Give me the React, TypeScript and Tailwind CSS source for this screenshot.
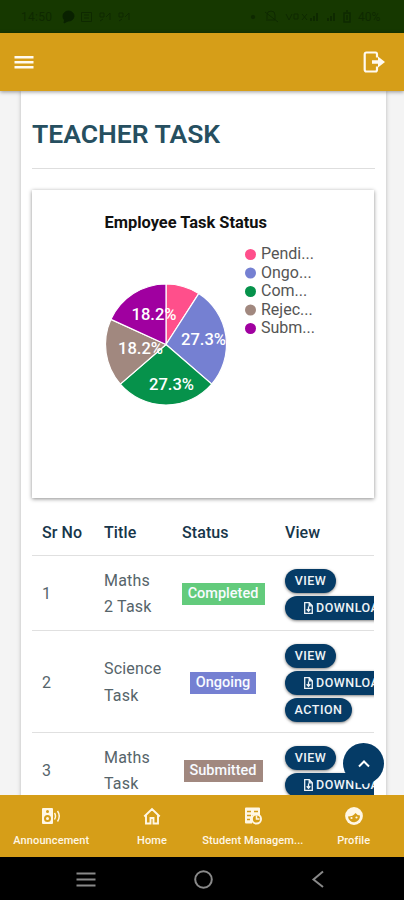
import type { ReactNode } from "react";

interface Slice {
  label: string;
  count: number;
  color: string;
  text?: { x: number; y: number; value: string };
}

const slices: Slice[] = [
  { label: "Pendi...", count: 1, color: "#ff4f8b" },
  { label: "Ongo...", count: 3, color: "#7580d2", text: { x: 149, y: 155, value: "27.3%" } },
  { label: "Com...", count: 3, color: "#06924b", text: { x: 117, y: 200, value: "27.3%" } },
  { label: "Rejec...", count: 2, color: "#a1887f", text: { x: 86, y: 163.5, value: "18.2%" } },
  { label: "Subm...", count: 2, color: "#a000a0", text: { x: 99.5, y: 129.5, value: "18.2%" } },
];

interface Task {
  id: number;
  title: [string, string];
  status: string;
  badge: string;
  action?: boolean;
}

const tasks: Task[] = [
  { id: 1, title: ["Maths", "2 Task"], status: "Completed", badge: "bg-[#63cb7c] w-[83px]" },
  { id: 2, title: ["Science", "Task"], status: "Ongoing", badge: "bg-[#7580d2] w-[66px]", action: true },
  { id: 3, title: ["Maths", "Task"], status: "Submitted", badge: "bg-[#a1887f] w-[79px]" },
];

function StatusBar() {
  return (
    <div className="flex h-[33px] shrink-0 items-center bg-[#163800] pl-[21px] pr-[21px] text-[12px] text-[#0e2900]">
      <span className="w-[41px] tracking-wide">14:50</span>
      <svg width="69" height="14" viewBox="0 0 69 14" fill="none" stroke="currentColor">
        <path d="M1 6a5.500 5 0 1 1 5 5l-4 2 .5-3A5 5 0 0 1 1 6z" fill="#092100" stroke="#092100" />
        <path d="M19.500 2.500h10v9h-10zM22 5h5M22 8h5" />
        <path d="M38 3h4v4h-4zM44 7l4-4v7M38 11l3-2M57 3h4v4h-4zM63 7l4-4v7M57 11l3-2" />
      </svg>
      <svg className="ml-auto" width="104" height="14" viewBox="0 0 104 14" fill="none" stroke="currentColor">
        <circle cx="3" cy="7" r="1.700" fill="currentColor" />
        <path d="M17 9V5a4 4 0 0 1 8 0v5H16M15 2l13 10M36 4l3 6 3-6M44 4h4v5h-4zM52 4l5 6M57 4l-5 6" />
        <path d="M61 11V8M64 11V6M67 11V3M78 11V8M81 11V6M84 11V3" strokeWidth="2" />
        <path d="M94 3h6v9h-6zM96 1h2M97 5v5" strokeWidth="1.500" />
      </svg>
      <span className="ml-1 w-[25px]">40%</span>
    </div>
  );
}

function LogoutIcon() {
  return (
    <svg width="22" height="22" viewBox="0 0 22 22" fill="none" stroke="#fffaf0" strokeWidth="2.200">
      <path d="M14 6.500V3.500Q14 1.500 12.500 1.500H3.500Q1.700 1.500 1.700 3.500v15Q1.700 20.500 3.500 20.500h9q1.500 0 1.500-2V15.500" />
      <path d="M9 9.300h6V5.500l7 5.500-7 5.500v-3.800H9z" fill="#fffaf0" stroke="none" />
    </svg>
  );
}

function Header() {
  return (
    <header className="z-10 flex h-[58px] shrink-0 items-center justify-between bg-[#d69e18] pl-[14px] pr-[19px] shadow-[0_1px_4px_rgba(0,0,0,0.4)]">
      <svg width="20" height="14" viewBox="0 0 20 14" fill="#fffaf0">
        <path d="M.5 1h19v2.600H.5zM.5 6h19v2.600H.5zM.5 11h19v2.600H.5z" />
      </svg>
      <LogoutIcon />
    </header>
  );
}

function PieChart() {
  const total = slices.reduce((sum, s) => sum + s.count, 0);
  const cx = 134;
  const cy = 154.5;
  const r = 60.5;
  let angle = 0;

  const paths = slices.map((s) => {
    const start = angle;
    angle += (s.count / total) * Math.PI * 2;
    const x1 = cx + r * Math.sin(start);
    const y1 = cy - r * Math.cos(start);
    const x2 = cx + r * Math.sin(angle);
    const y2 = cy - r * Math.cos(angle);
    return { ...s, d: `M${cx} ${cy}L${x1} ${y1}A${r} ${r} 0 0 1 ${x2} ${y2}Z` };
  });

  return (
    <svg width="342" height="308" viewBox="0 0 342 308" className="block">
      <text x="72.500" y="38" fontSize="16" fontWeight="700" fill="#111" textLength="162.500" lengthAdjust="spacingAndGlyphs">
        Employee Task Status
      </text>
      {paths.map((p) => (
        <path key={p.label} d={p.d} fill={p.color} stroke="#fff" strokeWidth="1.200" />
      ))}
      {paths.map(
        (p) =>
          p.text && (
            <text
              key={p.label}
              x={p.text.x}
              y={p.text.y}
              fontSize="16.500"
              fontWeight="500"
              fill="#fff"
              textLength="45"
              lengthAdjust="spacingAndGlyphs"
            >
              {p.text.value}
            </text>
          ),
      )}
      {slices.map((s, i) => (
        <g key={s.label}>
          <circle cx="218.500" cy={64.5 + i * 18.5} r="5.500" fill={s.color} />
          <text x="229" y={69 + i * 18.5} fontSize="16" fill="#555">
            {s.label}
          </text>
        </g>
      ))}
    </svg>
  );
}

function Pill({ className, children }: { className: string; children: ReactNode }) {
  return (
    <div
      className={`flex h-6 shrink-0 items-center rounded-full bg-[#053b66] text-[12.5px] font-medium tracking-[0.5px] text-[#eef3f7] shadow-[0_1px_3px_rgba(0,0,0,0.5)] ${className}`}
    >
      {children}
    </div>
  );
}

function DownloadIcon() {
  return (
    <svg width="9" height="12" viewBox="0 0 9 12" fill="none" stroke="currentColor" strokeWidth="1.300">
      <path d="M.7.7h4.600l3 3v7.600H.7zM5.200.8v3h3M4.500 4.500v4.300M2.700 7.200l1.800 2 1.800-2" />
    </svg>
  );
}

function TaskRow({ task }: { task: Task }) {
  return (
    <div
      className={`grid shrink-0 grid-cols-[62px_78px_102px_100px] border-t border-[#e0e0e0] ${
        task.action ? "h-[102px]" : "h-[75px]"
      }`}
    >
      <div className="flex items-center pl-[10px] pt-[2px]">{task.id}</div>
      <div className="flex flex-col justify-center pl-[10px] pt-[2px] leading-[26.5px]">
        <span>{task.title[0]}</span>
        <span>{task.title[1]}</span>
      </div>
      <div className="flex items-center justify-center pt-[2px]">
        <span
          className={`flex h-[22px] items-center justify-center text-[14.5px] font-medium tracking-normal text-[#f8fbff] ${task.badge}`}
        >
          {task.status}
        </span>
      </div>
      <div className="flex flex-col items-start gap-[3px] overflow-hidden pl-[11px] pt-[13px]">
        <Pill className="w-[51px] justify-center">VIEW</Pill>
        <Pill className="w-[119px] gap-[3px] pl-[19px]">
          <DownloadIcon />
          DOWNLOAD
        </Pill>
        {task.action && <Pill className="w-[67px] justify-center">ACTION</Pill>}
      </div>
    </div>
  );
}

function NavItem({ label, children }: { label: string; children: ReactNode }) {
  return (
    <div className="flex w-[101px] flex-col items-center pt-[11px] text-[#fff7e5]">
      <svg width="20" height="20" viewBox="0 0 20 20" fill="none" stroke="currentColor" strokeWidth="1.700">
        {children}
      </svg>
      <span className="mt-[8px] whitespace-nowrap text-[11px] font-medium leading-[14px] tracking-[0.1px]">
        {label}
      </span>
    </div>
  );
}

function BottomNav() {
  return (
    <nav className="z-10 flex h-[62px] shrink-0 bg-[#d69e18] pl-px">
      <NavItem label="Announcement">
        <path
          d="M2 2h9q1 0 1 1v14q0 1-1 1H2q-1 0-1-1V3q0-1 1-1zM6.500 4a1.500 1.500 0 1 0 0 3 1.500 1.500 0 0 0 0-3zM6.500 9a3.500 3.500 0 1 0 0 7 3.500 3.500 0 0 0 0-7z"
          fill="currentColor"
          fillRule="evenodd"
          stroke="none"
        />
        <circle cx="6.500" cy="12.500" r="1.500" fill="currentColor" stroke="none" />
        <path d="M13.500 7q2 3 0 6.500M16.500 5q3.500 5 0 10.500" strokeWidth="1.500" />
      </NavItem>
      <NavItem label="Home">
        <path d="M2.300 10.500 10 3l7.700 7.500M4 9.500v8h4.500V12h3v5.500H16v-8" strokeWidth="1.900" />
      </NavItem>
      <NavItem label="Student Managem...">
        <path d="M3 1.500h13q1 0 1 1V9H9v8.500H3q-1 0-1-1v-14q0-1 1-1z" fill="currentColor" stroke="none" />
        <path d="M4 5.500h4M11 5.500h4M4 9.500h4M4 13.500h3" stroke="#d69e18" strokeWidth="1.500" />
        <circle cx="13.500" cy="13" r="5.500" fill="currentColor" stroke="none" />
        <circle cx="13.500" cy="13" r="3.600" fill="#d69e18" stroke="none" />
        <path d="M13.500 9.500V13h3" strokeWidth="1.500" />
      </NavItem>
      <NavItem label="Profile">
        <circle cx="10" cy="10" r="8.900" fill="currentColor" stroke="none" />
        <path d="M4 10.500q5 0 7.500-3.500 2 2.500 4.500 2.500a6 6.300 0 0 1-12 1z" fill="#d69e18" stroke="none" />
        <circle cx="7.500" cy="12" r="1.100" fill="currentColor" stroke="none" />
        <circle cx="12.500" cy="11.500" r="1.100" fill="currentColor" stroke="none" />
      </NavItem>
    </nav>
  );
}

function SystemNav() {
  return (
    <div className="flex h-[43px] shrink-0 items-center justify-between bg-black pl-[76px] pr-[79px] text-[#898989]">
      <svg width="20" height="20" viewBox="0 0 20 20" fill="none" stroke="currentColor" strokeWidth="2">
        <path d="M.5 4.500h19M.5 10.500h19M.5 16.500h19" />
      </svg>
      <svg width="20" height="20" viewBox="0 0 20 20" fill="none" stroke="currentColor" strokeWidth="2">
        <circle cx="9.500" cy="10.500" r="8.300" />
      </svg>
      <svg width="14" height="20" viewBox="0 0 14 20" fill="none" stroke="currentColor" strokeWidth="2">
        <path d="M12 2.500 2.500 10.500 12 18" />
      </svg>
    </div>
  );
}

export default function App() {
  return (
    <div className="relative flex h-[900px] w-[404px] flex-col overflow-hidden bg-[#f4f4f4] font-['Roboto',sans-serif]">
      <StatusBar />
      <Header />
      <main className="flex min-h-0 flex-1 flex-col overflow-hidden pl-[21px] pr-[18px]">
        <div className="flex flex-1 flex-col bg-white px-[11px] shadow-[0_0_4px_rgba(0,0,0,0.25)]">
          <h1 className="h-[77px] shrink-0 pt-[26px] text-[26.5px] font-semibold leading-[34px] text-[#264f60]">
            TEACHER TASK
          </h1>
          <div className="h-[22px] shrink-0 border-t border-[#dedede]" />
          <div className="h-[308px] w-[342px] shrink-0 bg-white shadow-[0_1px_4px_rgba(0,0,0,0.45)]">
            <PieChart />
          </div>
          <div className="flex w-[342px] shrink-0 flex-col text-[16px] tracking-[0.2px] text-[#56646a]">
            <div className="grid h-[57px] grid-cols-[62px_78px_103px_99px] items-center pt-[12px] text-[16px] font-medium tracking-[0.1px] text-[#17364a]">
              <span className="pl-[10px]">Sr No</span>
              <span className="pl-[10px]">Title</span>
              <span className="pl-[10px]">Status</span>
              <span className="pl-[10px]">View</span>
            </div>
            {tasks.map((task) => (
              <TaskRow key={task.id} task={task} />
            ))}
          </div>
        </div>
      </main>
      <button
        aria-label="Back to top"
        className="absolute left-[343px] top-[743px] flex h-[41px] w-[41px] items-center justify-center rounded-full bg-[#053b66]"
      >
        <svg width="12" height="8" viewBox="0 0 12 8" fill="none" stroke="#fff" strokeWidth="2">
          <path d="m1 6.500 5-5 5 5" />
        </svg>
      </button>
      <BottomNav />
      <SystemNav />
    </div>
  );
}
